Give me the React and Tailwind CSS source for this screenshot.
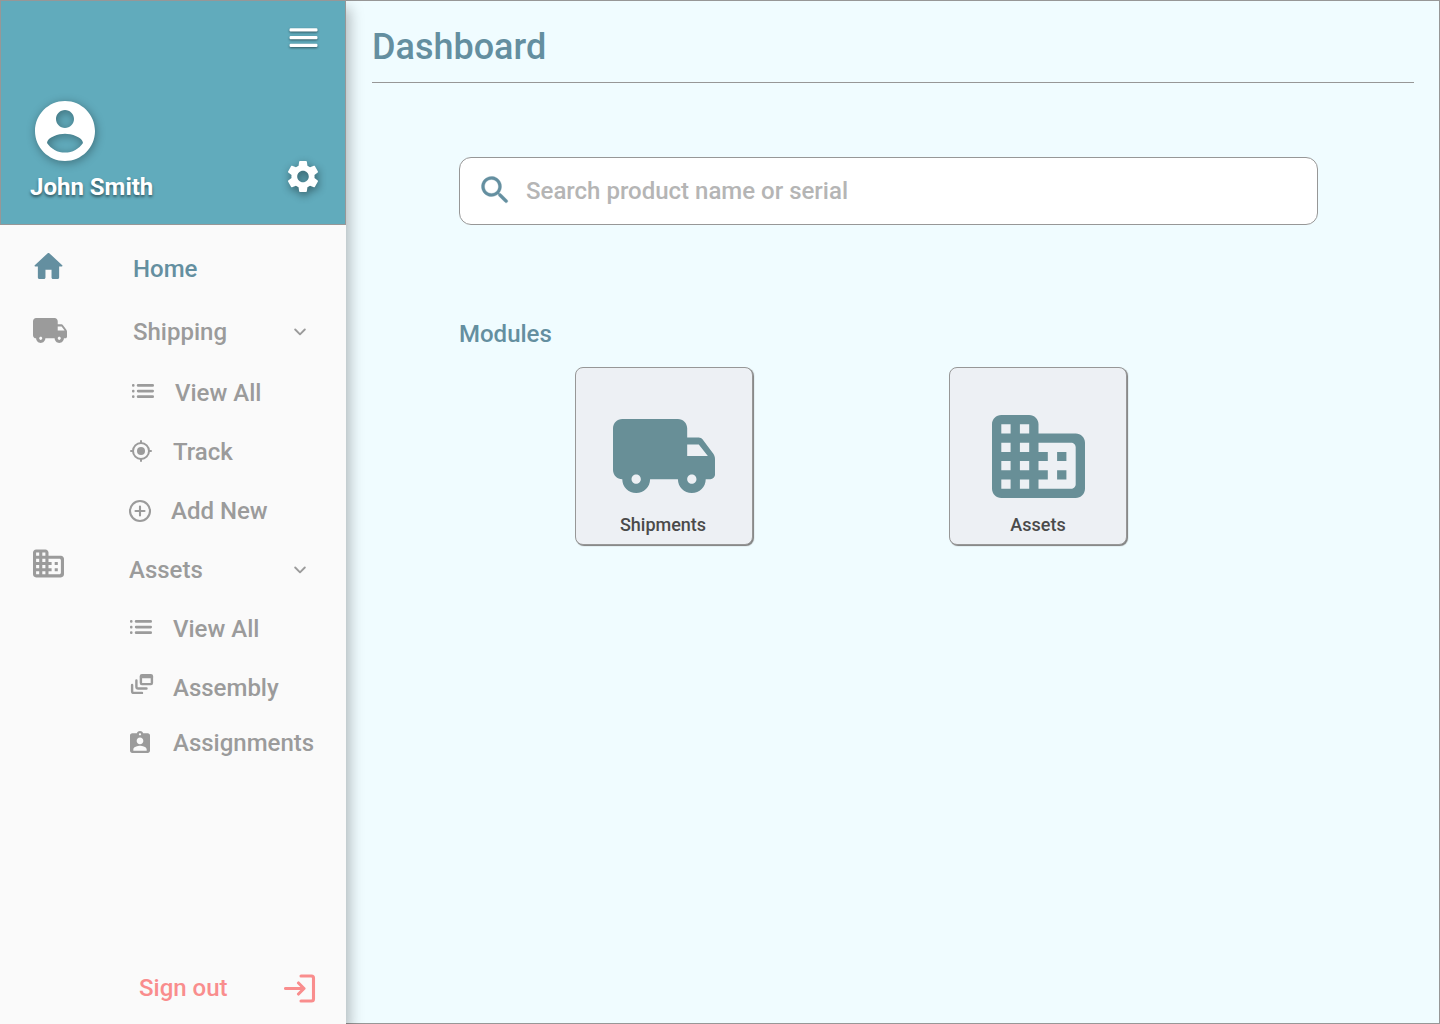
import React from "react";

const paths = {
  home: "M10 19v-5h4v5c0 .55.45 1 1 1h3c.55 0 1-.45 1-1v-7h1.7c.46 0 .68-.57.33-.87L12.67 3.6c-.38-.34-.96-.34-1.34 0l-8.36 7.53c-.34.3-.13.87.33.87H5v7c0 .55.45 1 1 1h3c.55 0 1-.45 1-1z",
  truck:
    "M19.5 8H17V6c0-1.1-.9-2-2-2H3c-1.1 0-2 .9-2 2v9c0 1.1.9 2 2 2 0 1.66 1.34 3 3 3s3-1.34 3-3h6c0 1.66 1.34 3 3 3s3-1.34 3-3h1c.55 0 1-.45 1-1v-3.33c0-.43-.14-.85-.4-1.2L20.3 8.4c-.19-.25-.49-.4-.8-.4zM6 18c-.55 0-1-.45-1-1s.45-1 1-1 1 .45 1 1-.45 1-1 1zm13.5-8.5l1.96 2.5H17V9.5h2.5zM18 18c-.55 0-1-.45-1-1s.45-1 1-1 1 .45 1 1-.45 1-1 1z",
  building:
    "M12 7V5c0-1.1-.9-2-2-2H4c-1.1 0-2 .9-2 2v14c0 1.1.9 2 2 2h16c1.1 0 2-.9 2-2V9c0-1.1-.9-2-2-2h-8zM6 19H4v-2h2v2zm0-4H4v-2h2v2zm0-4H4V9h2v2zm0-4H4V5h2v2zm4 12H8v-2h2v2zm0-4H8v-2h2v2zm0-4H8V9h2v2zm0-4H8V5h2v2zm9 12h-7v-2h2v-2h-2v-2h2v-2h-2V9h7c.55 0 1 .45 1 1v8c0 .55-.45 1-1 1zm-1-8h-2v2h2v-2zm0 4h-2v2h2v-2z",
  account:
    "M12 2C6.48 2 2 6.48 2 12s4.48 10 10 10 10-4.48 10-10S17.52 2 12 2zm0 3c1.66 0 3 1.34 3 3s-1.34 3-3 3-3-1.34-3-3 1.34-3 3-3zm0 14.2c-2.5 0-4.71-1.28-6-3.22.03-1.99 4-3.08 6-3.08 1.99 0 5.97 1.09 6 3.08-1.29 1.94-3.5 3.22-6 3.22z",
  gear: "M19.14 12.94c.04-.3.06-.61.06-.94 0-.32-.02-.64-.07-.94l2.03-1.58c.18-.14.23-.41.12-.61l-1.92-3.32c-.12-.22-.37-.29-.59-.22l-2.39.96c-.5-.38-1.03-.7-1.62-.94l-.36-2.54c-.04-.24-.24-.41-.48-.41h-3.84c-.24 0-.43.17-.47.41l-.36 2.54c-.59.24-1.13.57-1.62.94l-2.39-.96c-.22-.08-.47 0-.59.22L2.74 8.87c-.12.21-.08.47.12.61l2.03 1.58c-.05.3-.09.63-.09.94s.02.64.07.94l-2.03 1.58c-.18.14-.23.41-.12.61l1.92 3.32c.12.22.37.29.59.22l2.39-.96c.5.38 1.03.7 1.62.94l.36 2.54c.05.24.24.41.48.41h3.84c.24 0 .44-.17.47-.41l.36-2.54c.59-.24 1.13-.56 1.62-.94l2.39.96c.22.08.47 0 .59-.22l1.92-3.32c.12-.22.07-.47-.12-.61l-2.01-1.58zM12 15.6c-1.98 0-3.6-1.62-3.6-3.6s1.62-3.6 3.6-3.6 3.6 1.62 3.6 3.6-1.62 3.6-3.6 3.6z",
  search:
    "M15.5 14h-.79l-.28-.27c1.2-1.4 1.82-3.31 1.48-5.34-.47-2.78-2.79-5-5.59-5.34-4.23-.52-7.79 3.04-7.27 7.27.34 2.8 2.56 5.12 5.34 5.59 2.03.34 3.94-.28 5.34-1.48l.27.28v.79l4.25 4.25c.41.41 1.08.41 1.49 0 .41-.41.41-1.08 0-1.49L15.5 14zm-6 0C7.01 14 5 11.99 5 9.5S7.01 5 9.5 5 14 7.01 14 9.5 11.99 14 9.5 14z",
  badge:
    "M19 3h-4.18C14.4 1.84 13.3 1 12 1s-2.4.84-2.82 2H5c-1.1 0-2 .9-2 2v14c0 1.1.9 2 2 2h14c1.1 0 2-.9 2-2V5c0-1.1-.9-2-2-2zm-7 0c.55 0 1 .45 1 1s-.45 1-1 1-1-.45-1-1 .45-1 1-1zm0 4c1.66 0 3 1.34 3 3s-1.34 3-3 3-3-1.34-3-3 1.34-3 3-3zm6 12H6v-1.4c0-2 4-3.1 6-3.1s6 1.1 6 3.1V19z",
};

function Icon({ name, box = "0 0 24 24", className, outline }) {
  return (
    <svg viewBox={box} fill="currentColor" preserveAspectRatio="none" className={"block shrink-0 overflow-visible " + className}>
      <path d={paths[name]} stroke={outline ? "currentColor" : "none"} strokeWidth={outline || 0} />
    </svg>
  );
}

function ListIcon({ className }) {
  return (
    <svg viewBox="0 0 22 15" fill="currentColor" className={"block shrink-0 h-[15px] w-[22px] " + className}>
      {[0.1, 5.7, 11.3].map((y) => (
        <g key={y}>
          <rect x="0" y={y} width="2.5" height="2.7" rx="1" />
          <rect x="4.8" y={y} width="17.2" height="2.7" rx="1.3" />
        </g>
      ))}
    </svg>
  );
}

function TargetIcon({ className }) {
  return (
    <svg viewBox="0 0 22 22" fill="none" stroke="currentColor" strokeWidth="2" className={"block shrink-0 size-[22px] " + className}>
      <circle cx="11" cy="11" r="8" />
      <circle cx="11" cy="11" r="4" fill="currentColor" stroke="none" />
      <path strokeLinecap="round" d="M11 1v2M11 19v2M1 11h2M19 11h2" />
    </svg>
  );
}

function PlusIcon({ className }) {
  return (
    <svg viewBox="0 0 22 22" fill="none" stroke="currentColor" strokeWidth="2.1" strokeLinecap="round" className={"block shrink-0 size-[22px] overflow-visible " + className}>
      <circle cx="11" cy="11" r="10" />
      <path d="M11 6.5v9M6.5 11h9" />
    </svg>
  );
}

function FeedIcon({ className }) {
  return (
    <svg viewBox="0 0 22 20" fill="none" stroke="currentColor" strokeWidth="2.4" strokeLinecap="round" strokeLinejoin="round" className={"block shrink-0 h-[20px] w-[22px] overflow-visible " + className}>
      <path d="M1.1 11v6.2q0 1.700 1.800 1.700H11M5.400 6.500v6.300q0 1.700 1.800 1.700H15.500" />
      <rect x="9.9" y="1.1" width="11" height="9" rx="1" />
      <path d="M10 3h11" />
    </svg>
  );
}

function Chevron({ className = "" }) {
  return (
    <svg viewBox="0 0 12 8" fill="none" stroke="currentColor" strokeWidth="1.9" strokeLinecap="round" strokeLinejoin="round" className={"block shrink-0 h-[8px] w-[12px] " + className}>
      <path d="M1.2 1.5 6 6.3l4.8-4.8" />
    </svg>
  );
}

function SubItem({ icon, label, className }) {
  return (
    <li className={"flex h-10 items-center " + className}>
      {icon}
      <span>{label}</span>
    </li>
  );
}

function ModuleCard({ icon, label, labelClass = "" }) {
  return (
    <button className="flex h-[178px] w-[178px] flex-col items-center rounded-lg border border-[#979797] bg-[#edf0f4] shadow-[1px_1px_1px_#7d7d7d]">
      <span className="flex h-[142px] items-end text-[#688f97]">{icon}</span>
      <span className={"mt-px text-lg font-medium leading-[28px] text-[#4a4a4a] " + labelClass}>{label}</span>
    </button>
  );
}

export default function App() {
  return (
    <div className="flex h-[1024px] w-[1440px] overflow-hidden bg-[#f0fcff] font-['Roboto',sans-serif] text-2xl font-medium">
      <aside className="z-10 flex w-[346px] shrink-0 flex-col bg-[#fafafa] text-[#9b9b9b] shadow-[4px_8px_13px_rgba(0,0,0,0.26)]">
        <header className="flex h-[225px] justify-between border border-[#979797] bg-[#61abbc] text-white">
          <div className="flex flex-col pl-[29px] pt-[100px]">
            <Icon name="account" box="2 2 20 20" className="ml-[5px] size-[60px] drop-shadow-[1px_2px_5px_rgba(0,0,0,0.35)]" />
            <span className="mt-[10px] font-bold leading-[32px] [text-shadow:0_2px_3px_rgba(0,0,0,0.5)]">John Smith</span>
          </div>
          <div className="flex flex-col items-end pr-[27px] pt-[27px]">
            <svg viewBox="0 0 28 20" fill="currentColor" className="h-[20px] w-[28px] overflow-visible drop-shadow-[0_1px_1px_rgba(0,0,0,0.5)]">
              <rect x="-0.500" y="0.200" width="28" height="3.200" rx="1.200" />
              <rect x="-0.500" y="8" width="28" height="3.200" rx="1.200" />
              <rect x="-0.500" y="15.700" width="28" height="3.200" rx="1.200" />
            </svg>
            <Icon name="gear" box="2.68 2.4 18.65 19.2" className="mt-[113px] h-[31px] w-[30px] drop-shadow-[1px_3px_4px_rgba(0,0,0,0.45)]" />
          </div>
        </header>
        <nav className="pl-[33px] pt-[24px]">
          <ul>
            <li className="flex h-10 items-center text-[#648fa0]">
              <Icon name="home" box="2.46 3.34 18.42 16.66" className="-mt-[6px] ml-px mr-[71px] h-[26px] w-[28px]" />
              <span>Home</span>
            </li>
            <li className="mt-[23px] flex h-10 items-center">
              <Icon name="truck" box="1 4 22 16" className="-mt-[3px] mr-[66px] h-[25px] w-[34px]" />
              <span className="w-[161px]">Shipping</span>
              <Chevron />
            </li>
          </ul>
          <ul className="pl-[96px]">
            <SubItem className="mt-[21px]" icon={<ListIcon className="-mt-[3px] ml-[3px] mr-[21px]" />} label="View All" />
            <SubItem className="mt-[19px]" icon={<TargetIcon className="-mt-[2px] ml-px mr-[21px]" />} label="Track" />
            <SubItem className="mt-[19px]" icon={<PlusIcon className="mr-[20px]" />} label="Add New" />
          </ul>
          <div className="mt-[19px] flex h-10 items-center">
            <Icon name="building" box="2 2.700 20 18" className="-mt-[14px] mr-[65px] h-[28px] w-[31px]" />
            <span className="w-[165px]">Assets</span>
            <Chevron className="-mt-px" />
          </div>
          <ul className="pl-[96px]">
            <SubItem className="mt-[19px]" icon={<ListIcon className="-mt-[3px] ml-px mr-[21px]" />} label="View All" />
            <SubItem className="mt-[19px]" icon={<FeedIcon className="-mt-[8px] ml-[2px] mr-[20px]" />} label="Assembly" />
            <SubItem className="mt-[15px]" icon={<Icon name="badge" box="3 1 18 20" className="-mt-[2px] ml-px mr-[23px] h-[22px] w-[20px]" />} label="Assignments" />
          </ul>
        </nav>
        <div className="mb-[16px] mt-auto flex h-10 items-center justify-between pl-[139px] pr-[30px] text-[#f98d8d]">
          <span>Sign out</span>
          <svg viewBox="0 0 32 29" fill="none" stroke="currentColor" strokeWidth="3.1" strokeLinecap="round" strokeLinejoin="round" className="h-[29px] w-[32px]">
            <path d="M17 2h10.5q2 0 2 2v21q0 2-2 2H17" />
            <path d="M1.500 14.500h18M14.500 9l5.500 5.500-5.500 5.500" />
          </svg>
        </div>
      </aside>
      <main className="flex-1 border-y border-r border-[#979797] pl-[26px] pr-[25px]">
        <h1 className="h-[82px] border-b border-[#979797] pt-[25px] text-4xl font-medium leading-[42px] text-[#648fa0]">Dashboard</h1>
        <div className="ml-[87px] mr-[96px]">
          <label className="mt-[74px] flex h-[68px] items-center rounded-xl border border-[#979797] bg-white pl-[21px]">
            <Icon name="search" box="2.700 2.700 17.500 17.500" className="-mt-[3px] size-[27px] text-[#648fa0]" outline={0.2} />
            <input className="ml-[18px] w-[600px] outline-none placeholder:text-[#b5b5b5]" placeholder="Search product name or serial" />
          </label>
          <h2 className="mt-[93px] leading-[32px] text-[#648fa0]">Modules</h2>
          <div className="ml-[116px] mt-[17px] flex gap-[196px]">
            <ModuleCard label="Shipments" labelClass="mr-[2px]" icon={<Icon name="truck" box="1 4 22 16" className="mb-[17px] h-[74px] w-[102px]" />} />
            <ModuleCard label="Assets" icon={<Icon name="building" box="2 3 20 18" className="mb-[12px] h-[83px] w-[93px]" />} />
          </div>
        </div>
      </main>
    </div>
  );
}
